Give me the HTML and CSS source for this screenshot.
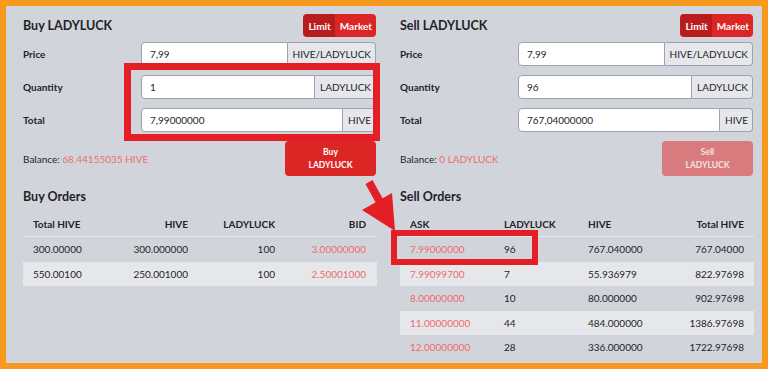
FILE: index.html
```html
<!DOCTYPE html>
<html>
<head>
    <title>LADYLUCK Market</title>
    <link rel="stylesheet" href="styles.css">
</head>
<body>
<div class="page">
    <div class="columns">
        <div class="panel">
            <div class="panel-head">
                <h2>Buy LADYLUCK</h2>
                <div class="toggle"><span class="on">Limit</span><span>Market</span></div>
            </div>
            <div class="form-row">
                <label>Price</label>
                <div class="input-group"><div class="input">7,99</div><div class="addon">HIVE/LADYLUCK</div></div>
            </div>
            <div class="form-row">
                <label>Quantity</label>
                <div class="input-group"><div class="input">1</div><div class="addon">LADYLUCK</div></div>
            </div>
            <div class="form-row">
                <label>Total</label>
                <div class="input-group"><div class="input">7,99000000</div><div class="addon">HIVE</div></div>
            </div>
            <div class="balance-row">
                <div class="balance">Balance: <span class="red">68.44155035 HIVE</span></div>
                <button class="btn">Buy<br>LADYLUCK</button>
            </div>

            <h3>Buy Orders</h3>
            <div class="orders buy">
                <div class="row head"><span>Total HIVE</span><span class="r">HIVE</span><span class="r">LADYLUCK</span><span class="r">BID</span></div>
                <div class="row"><span>300.00000</span><span class="r">300.000000</span><span class="r">100</span><span class="r red">3.00000000</span></div>
                <div class="row"><span>550.00100</span><span class="r">250.001000</span><span class="r">100</span><span class="r red">2.50001000</span></div>
            </div>
        </div>

        <div class="panel">
            <div class="panel-head">
                <h2>Sell LADYLUCK</h2>
                <div class="toggle"><span class="on">Limit</span><span>Market</span></div>
            </div>
            <div class="form-row">
                <label>Price</label>
                <div class="input-group"><div class="input">7,99</div><div class="addon">HIVE/LADYLUCK</div></div>
            </div>
            <div class="form-row">
                <label>Quantity</label>
                <div class="input-group"><div class="input">96</div><div class="addon">LADYLUCK</div></div>
            </div>
            <div class="form-row">
                <label>Total</label>
                <div class="input-group"><div class="input">767,04000000</div><div class="addon">HIVE</div></div>
            </div>
            <div class="balance-row">
                <div class="balance">Balance: <span class="red">0 LADYLUCK</span></div>
                <button class="btn disabled">Sell<br>LADYLUCK</button>
            </div>

            <h3>Sell Orders</h3>
            <div class="orders sell">
                <div class="row head"><span>ASK</span><span>LADYLUCK</span><span>HIVE</span><span class="r">Total HIVE</span></div>
                <div class="row"><span class="red">7.99000000</span><span>96</span><span>767.040000</span><span class="r">767.04000</span></div>
                <div class="row"><span class="red">7.99099700</span><span>7</span><span>55.936979</span><span class="r">822.97698</span></div>
                <div class="row"><span class="red">8.00000000</span><span>10</span><span>80.000000</span><span class="r">902.97698</span></div>
                <div class="row"><span class="red">11.00000000</span><span>44</span><span>484.000000</span><span class="r">1386.97698</span></div>
                <div class="row"><span class="red">12.00000000</span><span>28</span><span>336.000000</span><span class="r">1722.97698</span></div>
            </div>
        </div>
    </div>

    <!-- annotation overlay -->
    <svg class="marks" width="768" height="369" viewBox="0 0 768 369">
        <rect x="127.5" y="66.5" width="249" height="71" fill="none" stroke="#e31e24" stroke-width="7"/>
        <rect x="394" y="233" width="141" height="29" fill="none" stroke="#e31e24" stroke-width="6"/>
        <line x1="369" y1="182" x2="380" y2="202" stroke="#e31e24" stroke-width="8"/>
        <polygon points="362,210 392,193 395,231" fill="#e31e24"/>
    </svg>
</div>
</body>
</html>
```

FILE: styles.css
```css
* {
    box-sizing: border-box;
}

body {
    margin: 0;
    background: #f7991d;
    font-family: Lato, "Open Sans", sans-serif;
    color: #1f2329;
}

.page {
    position: relative;
    width: 768px;
    height: 369px;
    border: 6px solid #f7991d;
    background: #d1d5db;
    padding: 8px 8px 0 17px;
    overflow: hidden;
}

.columns {
    display: grid;
    grid-template-columns: 354px 354px;
    column-gap: 23px;
}

.panel-head {
    display: flex;
    justify-content: space-between;
    align-items: center;
    height: 23px;
    margin-bottom: 5px;
}

.panel-head h2 {
    margin: 0;
    font-size: 12.5px;
    font-weight: 700;
}

.toggle {
    display: flex;
    height: 23px;
    margin-right: 1px;
    border-radius: 4px;
    overflow: hidden;
    font-size: 10px;
    font-weight: 700;
    color: #fff;
}

.toggle span {
    display: flex;
    align-items: center;
    padding: 0 4px 0 5px;
    background: #dc2626;
}

.toggle span.on {
    background: #b91c1c;
}

.form-row {
    display: grid;
    grid-template-columns: 118px 235px;
    align-items: center;
    margin-bottom: 9px;
}

.form-row label {
    font-size: 10px;
    font-weight: 700;
}

.input-group {
    display: flex;
    height: 24px;
    font-size: 10px;
}

.input {
    flex: 1;
    display: flex;
    align-items: center;
    padding-left: 8px;
    background: #fff;
    border: 1px solid #9ca3af;
    border-radius: 4px 0 0 4px;
}

.addon {
    display: flex;
    align-items: center;
    padding: 0 4px 0 5px;
    background: #e5e7eb;
    border: 1px solid #9ca3af;
    border-left: none;
    border-radius: 0 4px 4px 0;
}

.balance-row {
    display: flex;
    justify-content: space-between;
    align-items: center;
    margin-right: 1px;
}

.balance {
    font-size: 10px;
}

.red {
    color: #f06a6a;
}

.btn {
    width: 91px;
    height: 35px;
    border: none;
    border-radius: 4px;
    background: #dc2626;
    color: #fff;
    font-family: inherit;
    font-size: 8.5px;
    font-weight: 700;
    line-height: 13px;
    padding: 0;
}

.btn.disabled {
    background: #d97b7e;
    color: #f3e3e3;
}

h3 {
    margin: 13px 0 8px;
    font-size: 12.5px;
    font-weight: 700;
}

.orders {
    font-size: 10px;
}

.orders .row {
    display: grid;
    height: 24.5px;
    align-items: center;
}

.orders.buy .row {
    grid-template-columns: 88px 87px 87px 91px;
}

.orders.sell .row {
    grid-template-columns: 94px 84px 88px 88px;
}

.orders .row span {
    padding: 0 10px;
}

.orders .row .r {
    text-align: right;
}

.orders .row.head {
    font-weight: 700;
    height: 25px;
    border-bottom: 1px solid #e5e7eb;
}

.orders .row:nth-child(odd):not(.head) {
    background: #e5e7eb;
}

.marks {
    position: absolute;
    left: -6px;
    top: -6px;
    pointer-events: none;
}
```
